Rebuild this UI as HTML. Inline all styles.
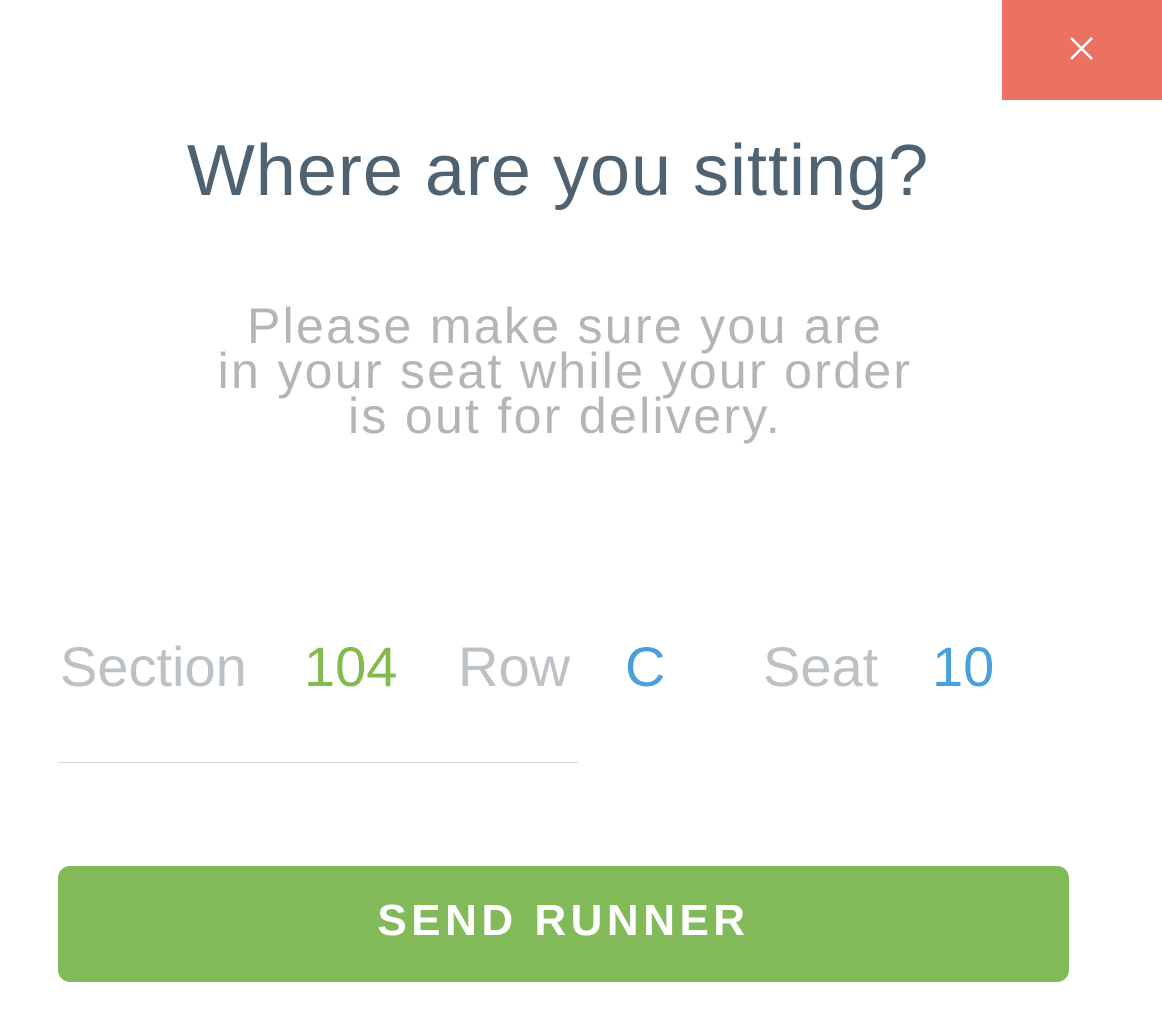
<!DOCTYPE html>
<html><head><style>
body{margin:0;width:1162px;height:1036px;background:#fff;position:relative;overflow:hidden;font-family:"Liberation Sans",sans-serif}
.abs{position:absolute;white-space:nowrap}
</style></head><body>
<div class="abs" style="left:1002px;top:0;width:160px;height:100px;background:#ec7160">
<svg width="160" height="100" style="position:absolute;left:0;top:0"><path d="M69 38L90 59M90 38L69 59" stroke="#fff" stroke-width="2.5"/></svg>
</div>
<div class="abs" style="left:0;width:1116px;top:126px;text-align:center;font-size:72px;color:#4e6272;line-height:90px;letter-spacing:1px">Where are you sitting?</div>
<div class="abs" style="left:0;width:1130px;top:304px;text-align:center;font-size:50px;color:#b3b5b8;line-height:45px;letter-spacing:2.3px">Please make sure you are<br>in your seat while your order<br>is out for delivery.</div>
<div class="abs" style="top:632px;font-size:56px;line-height:70px;color:#bcc1c6">
<span class="abs" style="left:60px">Section</span>
<span class="abs" style="left:304px;color:#82ba4e">104</span>
<span class="abs" style="left:458px">Row</span>
<span class="abs" style="left:625px;color:#4a9fdc">C</span>
<span class="abs" style="left:763px">Seat</span>
<span class="abs" style="left:932px;color:#4a9fdc">10</span>
</div>
<div class="abs" style="left:58px;top:762px;width:520px;height:1px;background:#d6d8db"></div>
<div class="abs" style="left:58px;top:866px;width:1011px;height:116px;background:#82ba5a;border-radius:12px;color:#fff;font-weight:bold;font-size:44px;line-height:110px;text-align:center;letter-spacing:4.5px">SEND RUNNER</div>
</body></html>
